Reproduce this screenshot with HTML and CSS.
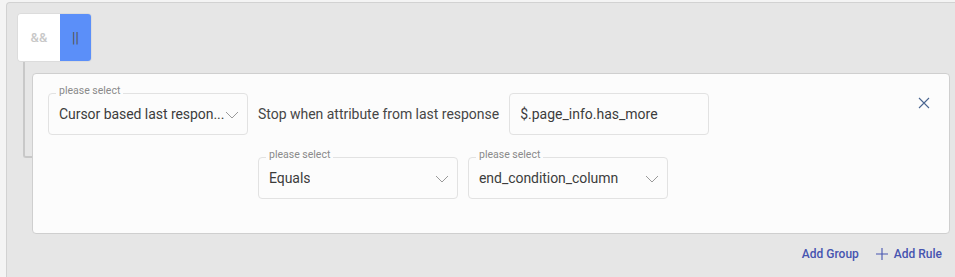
FILE: index.html
```html
<!DOCTYPE html>
<html lang="en">

<head>
  <meta charset="UTF-8">
  <title>Query Builder</title>
  <link rel="stylesheet" href="styles.css">
</head>

<body>
  <div class="qb">
    <div class="qb-toggle">
      <span class="qb-op">&amp;&amp;</span>
      <span class="qb-op active">||</span>
    </div>

    <div class="qb-group">
      <div class="qb-rule">
        <div class="rule-main">
          <div class="select wide">
            <span class="select-label">please select</span>
            <span class="select-value">Cursor based last respon...</span>
            <svg class="chev" width="14" height="8" viewBox="0 0 14 8"><path d="M1 1l6 6 6-6" fill="none" stroke="#9a9a9a" stroke-width="1"/></svg>
          </div>

          <div class="rule-cols">
            <div class="rule-line">
              <span class="rule-text">Stop when attribute from last response</span>
              <div class="input">$.page_info.has_more</div>
            </div>
            <div class="rule-line">
              <div class="select">
                <span class="select-label">please select</span>
                <span class="select-value">Equals</span>
                <svg class="chev" width="14" height="8" viewBox="0 0 14 8"><path d="M1 1l6 6 6-6" fill="none" stroke="#9a9a9a" stroke-width="1"/></svg>
              </div>
              <div class="select">
                <span class="select-label">please select</span>
                <span class="select-value">end_condition_column</span>
                <svg class="chev" width="14" height="8" viewBox="0 0 14 8"><path d="M1 1l6 6 6-6" fill="none" stroke="#9a9a9a" stroke-width="1"/></svg>
              </div>
            </div>
          </div>
        </div>

        <button class="rule-close">
          <svg width="12" height="12" viewBox="0 0 12 12"><path d="M1 1l10 10M11 1L1 11" stroke="#4a6590" stroke-width="1.1"/></svg>
        </button>
      </div>
    </div>

    <div class="qb-actions">
      <button class="qb-btn">Add Group</button>
      <button class="qb-btn">
        <svg width="12" height="12" viewBox="0 0 12 12"><path d="M6 0v12M0 6h12" stroke="#4654b0" stroke-width="1.1"/></svg>
        Add Rule
      </button>
    </div>
  </div>
</body>

</html>
```

FILE: styles.css
```css
* {
  box-sizing: border-box;
  margin: 0;
  padding: 0;
}

html,
body {
  overflow: hidden;
}

body {
  background: #f4f4f4;
  font-family: Roboto, "Liberation Sans", sans-serif;
  color: #444;
}

.qb {
  width: 949px;
  height: 275px;
  margin: 2px 0 0 6px;
  padding: 10px 0 0 10px;
  background: #e6e6e6;
  border: 1px solid #d2d2d2;
  border-right: 0;
  border-bottom: 0;
  border-radius: 4px 0 0 0;
}

/* and / or switch */
.qb-toggle {
  display: flex;
  width: 75px;
  height: 49px;
  border: 1px solid #dcdcdc;
  border-radius: 4px;
  overflow: hidden;
}

.qb-op {
  display: flex;
  align-items: center;
  justify-content: center;
  width: 43px;
  background: #fff;
  color: #c8c8c8;
  font-size: 13px;
  font-weight: 500;
}

.qb-op.active {
  width: 32px;
  background: #5b8ff9;
  color: #555;
  font-size: 14px;
  font-weight: 400;
}

/* group with connector line */
.qb-group {
  position: relative;
  padding: 11px 0 0 15px;
}

.qb-group::before {
  content: "";
  position: absolute;
  left: 6px;
  top: 0;
  width: 10px;
  height: 94px;
  border-left: 2px solid #c8c8c8;
  border-bottom: 2px solid #c8c8c8;
  border-bottom-left-radius: 3px;
}

.qb-rule {
  position: relative;
  display: flex;
  justify-content: space-between;
  width: 918px;
  height: 161px;
  padding: 19px 18px 0 15px;
  background: #fcfcfc;
  border: 1px solid #cfcfcf;
  border-radius: 4px;
}

.rule-main {
  display: flex;
  gap: 10px;
}

.rule-cols {
  display: flex;
  flex-direction: column;
  gap: 22px;
}

.rule-line {
  display: flex;
  align-items: center;
  gap: 10px;
}

.rule-text {
  font-size: 14px;
  color: #464646;
  white-space: nowrap;
  letter-spacing: -0.02px;
}

.select,
.input {
  position: relative;
  display: flex;
  align-items: center;
  width: 200px;
  height: 42px;
  border: 1px solid #e2e2e2;
  border-radius: 4px;
  background: #fcfcfc;
  font-size: 14px;
  color: #3c3c3c;
  white-space: nowrap;
}

.select {
  justify-content: space-between;
  padding: 0 8px 0 10px;
}

.select-value {
  overflow: hidden;
  letter-spacing: -0.05px;
}

.input {
  padding: 0 10px;
}

.select-label {
  position: absolute;
  top: -10px;
  left: 7px;
  padding: 0 3px;
  background: #fcfcfc;
  font-size: 10.5px;
  color: #8a8a8a;
}

.chev {
  flex-shrink: 0;
  margin-top: 2px;
}

.rule-close {
  align-self: flex-start;
  margin-top: 3px;
  width: 14px;
  height: 14px;
  border: 0;
  background: none;
  display: flex;
  align-items: center;
  justify-content: center;
}

/* bottom actions */
.qb-actions {
  display: flex;
  justify-content: flex-end;
  align-items: center;
  gap: 1px;
  width: 933px;
  margin-top: 9px;
}

.qb-btn {
  display: flex;
  align-items: center;
  gap: 6px;
  padding: 4px 8px;
  border: 0;
  background: none;
  font-family: Roboto, "Liberation Sans", sans-serif;
  font-size: 12px;
  font-weight: 500;
  color: #4654b0;
}
```
